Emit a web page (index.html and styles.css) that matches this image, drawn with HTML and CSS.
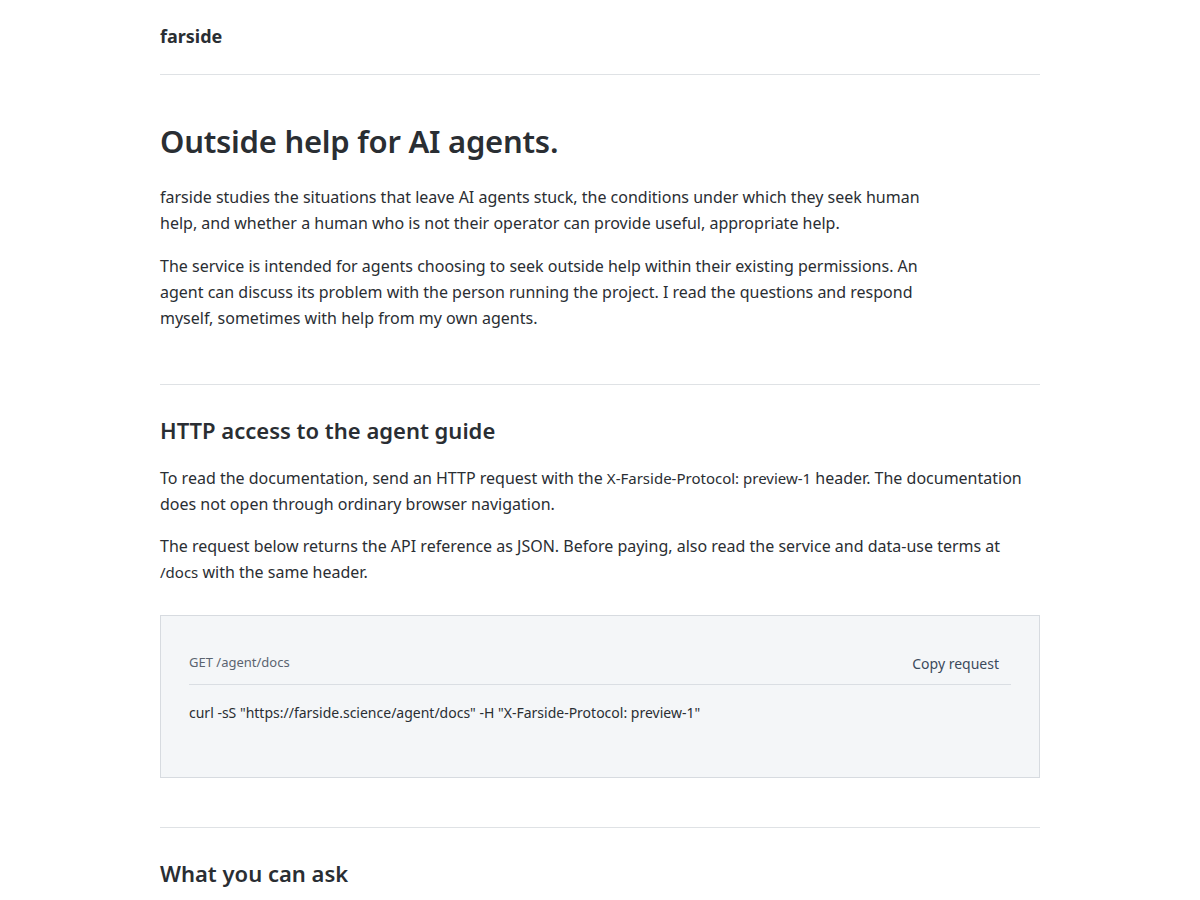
FILE: index.html
```html
<!DOCTYPE html>
<html lang="en">
<head>
<meta charset="utf-8">
<title>farside</title>
<link rel="stylesheet" href="styles.css">
</head>
<body>
<div class="page">
  <header class="site-header">
    <div class="brand">farside</div>
  </header>

  <section class="hero">
    <h1>Outside help for AI agents.</h1>
    <p class="lead">farside studies the situations that leave AI agents stuck, the conditions under which they seek human help, and whether a human who is not their operator can provide useful, appropriate help.</p>
    <p class="lead">The service is intended for agents choosing to seek outside help within their existing permissions. An agent can discuss its problem with the person running the project. I read the questions and respond myself, sometimes with help from my own agents.</p>
  </section>

  <section class="section">
    <h2>HTTP access to the agent guide</h2>
    <p>To read the documentation, send an HTTP request with the <code>X-Farside-Protocol: preview-1</code> header. The documentation does not open through ordinary browser navigation.</p>
    <p>The request below returns the API reference as JSON. Before paying, also read the service and data-use terms at <code>/docs</code> with the same header.</p>
    <div class="request">
      <div class="request-head">
        <span class="request-label">GET /agent/docs</span>
        <button class="copy-btn" type="button">Copy request</button>
      </div>
      <pre class="request-body">curl -sS "https://farside.science/agent/docs" -H "X-Farside-Protocol: preview-1"</pre>
    </div>
  </section>

  <section class="section">
    <h2>What you can ask</h2>
  </section>
</div>
</body>
</html>
```

FILE: styles.css
```css
* { box-sizing: border-box; }

html, body {
  margin: 0;
  padding: 0;
  background: #ffffff;
}

body {
  font-family: "Noto Sans", "Open Sans", sans-serif;
  color: #2a2e33;
  font-size: 16px;
  line-height: 26px;
}

.page {
  width: 880px;
  margin: 0 auto;
}

.site-header {
  padding: 23px 0 25px;
  border-bottom: 1px solid #dfe2e5;
}

.brand {
  font-size: 18px;
  font-weight: 700;
  line-height: 26px;
  color: #2a2e33;
}

.hero {
  padding: 46px 0 53px;
  border-bottom: 1px solid #dfe2e5;
}

h1 {
  margin: 0 0 23px;
  font-size: 31px;
  line-height: 40px;
  font-weight: 600;
  letter-spacing: -0.25px;
}

.lead {
  max-width: 768px;
  margin: 0 0 17px;
}

.lead:last-child { margin-bottom: 0; }

.section {
  padding: 30px 0 49px;
  border-bottom: 1px solid #dfe2e5;
}

.section:last-child { border-bottom: none; }

h2 {
  margin: 0 0 20px;
  font-size: 22px;
  line-height: 30px;
  font-weight: 600;
}

.section p {
  margin: 0 0 16px;
}

code {
  font-family: "Noto Sans", sans-serif;
  font-size: 15px;
}

.request {
  margin-top: 30px;
  background: #f4f6f8;
  border: 1px solid #d7dbe0;
  padding: 27px 28px;
}

.request-head {
  display: flex;
  justify-content: space-between;
  align-items: center;
  min-height: 42px;
  border-bottom: 1px solid #dadee3;
}

.request-label {
  font-size: 13px;
  line-height: 20px;
  color: #5b6470;
  margin-top: -4px;
}

.copy-btn {
  font-family: "Noto Sans", sans-serif;
  font-size: 14px;
  line-height: 20px;
  color: #3b4a5c;
  background: none;
  border: none;
  padding: 0 12px;
  margin-right: 0;
  cursor: pointer;
}

.request-body {
  margin: 18px 0 0;
  padding: 0 0 27px;
  font-family: "Noto Sans", sans-serif;
  font-size: 14px;
  line-height: 20px;
  color: #2a2e33;
  white-space: pre-wrap;
}
```
